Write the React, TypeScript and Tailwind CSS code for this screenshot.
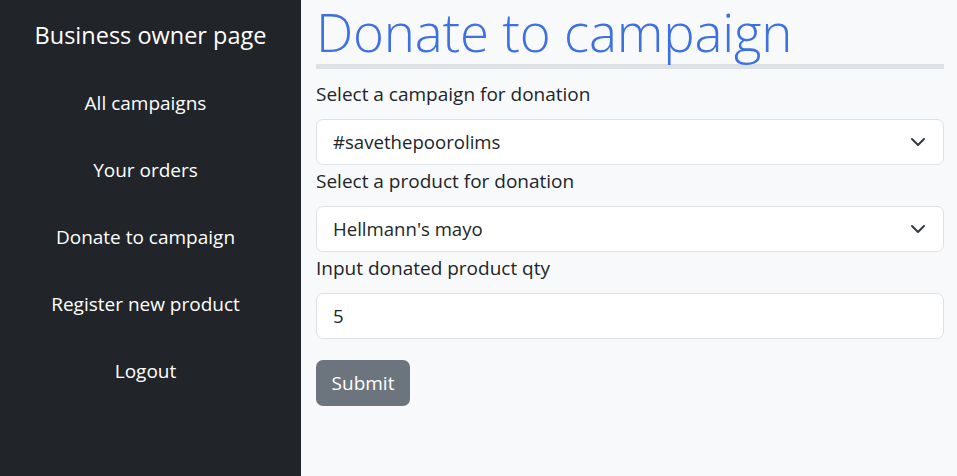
import React from "react";

const Chevron = () => (
  <svg width="16" height="16" viewBox="0 0 16 16" fill="none" stroke="#343a40" strokeWidth="2" strokeLinecap="round" strokeLinejoin="round">
    <path d="M2 5l6 6 6-6" />
  </svg>
);

export default function App() {
  const items = ["All campaigns", "Your orders", "Donate to campaign", "Register new product", "Logout"];
  return (
    <div className="flex w-[957px] h-[476px] bg-[#f8f9fa] text-[#212529]" style={{ fontFamily: '"Open Sans", "Noto Sans", sans-serif' }}>
      <aside className="w-[301px] shrink-0 bg-[#212529] text-white flex flex-col items-center">
        <div className="mt-[18px] text-[23.5px] leading-[34px]">Business owner page</div>
        <nav className="mt-[37px] pr-[10px] flex flex-col items-center gap-[39px]">
          {items.map((t) => (
            <div key={t} className="text-[19px] leading-[28px]">{t}</div>
          ))}
        </nav>
      </aside>
      <main className="flex-1 pl-[15px] pr-[13px]">
        <h1 className="-mt-[4px] text-[52.8px] leading-[72px] font-light text-[#3d70e0] tracking-[-0.2px] whitespace-nowrap">Donate to campaign</h1>
        <div className="-mt-[4px] h-[5px] bg-[#dee2e6]" />
        <div className="pt-[12px] text-[19px] leading-[27px]">Select a campaign for donation</div>
        <div className="mt-[11px] h-[46px] bg-white border border-[#dee2e6] rounded-[7px] flex items-center justify-between pl-[16px] pr-[17px] text-[18.6px]">
          <span>#savethepoorolims</span>
          <Chevron />
        </div>
        <div className="pt-[3px] text-[19px] leading-[27px]">Select a product for donation</div>
        <div className="mt-[11px] h-[46px] bg-white border border-[#dee2e6] rounded-[7px] flex items-center justify-between pl-[16px] pr-[17px] text-[18.6px]">
          <span>Hellmann's mayo</span>
          <Chevron />
        </div>
        <div className="pt-[3px] text-[19px] leading-[27px]">Input donated product qty</div>
        <div className="mt-[11px] h-[46px] bg-white border border-[#dee2e6] rounded-[7px] flex items-center pl-[16px] text-[18.6px]">
          <span>5</span>
        </div>
        <button className="mt-[21px] h-[46px] w-[94px] rounded-[7px] bg-[#6c757d] text-white text-[19px]">Submit</button>
      </main>
    </div>
  );
}
